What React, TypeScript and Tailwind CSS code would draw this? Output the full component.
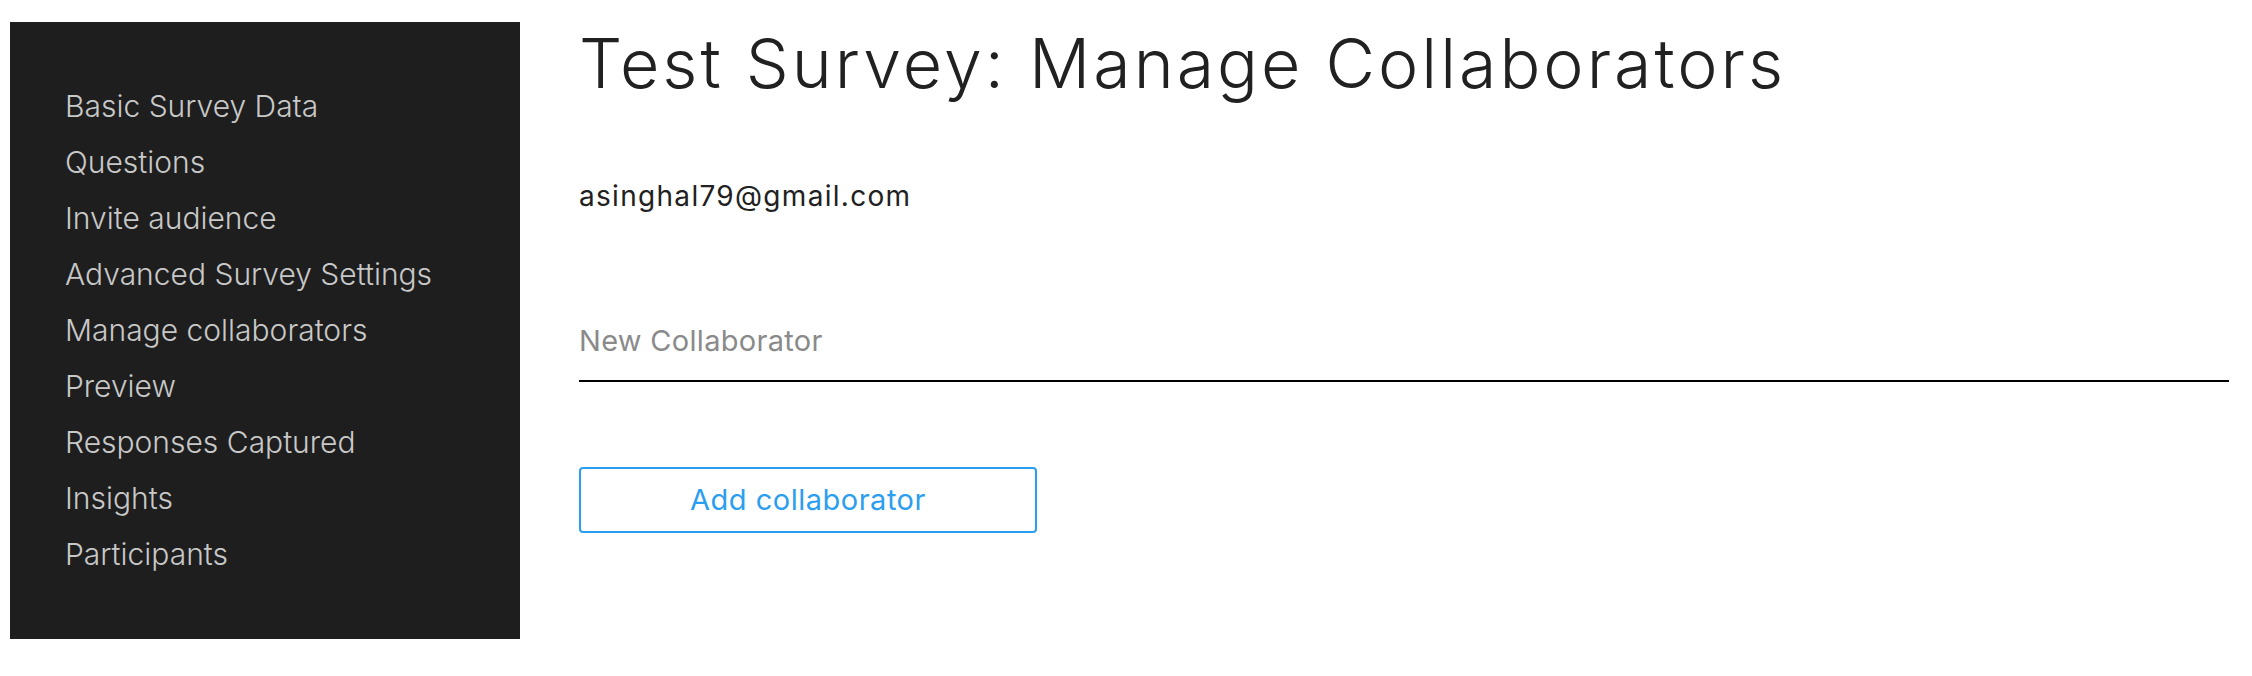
const navItems = [
  'Basic Survey Data',
  'Questions',
  'Invite audience',
  'Advanced Survey Settings',
  'Manage collaborators',
  'Preview',
  'Responses Captured',
  'Insights',
  'Participants',
];

export default function App() {
  return (
    <div
      className="flex min-h-[676px] w-full bg-white"
      style={{ fontFamily: 'Inter, "Open Sans", sans-serif' }}
    >
      {/* Sidebar */}
      <div className="ml-[10px] mt-[22px] h-[617px] w-[510px] shrink-0 bg-[#1e1e1e] pt-[56px] pl-[55px]">
        <ul>
          {navItems.map((item) => (
            <li
              key={item}
              className="h-[56px] text-[30px] leading-[56px] text-[#c8c8c8] font-light"
            >
              {item}
            </li>
          ))}
        </ul>
      </div>

      {/* Main */}
      <div className="ml-[59px] mr-[23px] flex-1 pt-[23px]">
        <h1 className="h-[80px] text-[68px] leading-[80px] tracking-[3px] text-[#212121] font-light">
          Test Survey: Manage Collaborators
        </h1>

        <p className="mt-[73px] h-[40px] text-[28px] leading-[40px] tracking-[1.3px] text-[#212121]">
          asinghal79@gmail.com
        </p>

        <div className="mt-[88px] border-b-[2px] border-black">
          <input
            type="text"
            placeholder="New Collaborator"
            className="h-[76px] w-full bg-transparent pb-[4px] text-[29px] tracking-[0.3px] text-[#212121] outline-none placeholder:text-[#8a8a8a]"
          />
        </div>

        <button className="mt-[85px] h-[66px] w-[458px] rounded-[4px] border-2 border-[#2c9ef0] text-[29px] tracking-[0.5px] text-[#2c9ef0]">
          Add collaborator
        </button>
      </div>
    </div>
  );
}
